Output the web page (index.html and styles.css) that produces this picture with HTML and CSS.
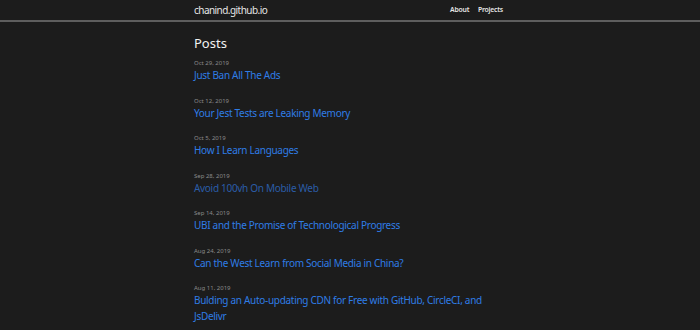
FILE: index.html
```html
<!DOCTYPE html>
<html lang="en">
<head>
    <meta charset="UTF-8">
    <meta name="viewport" content="width=device-width, initial-scale=1.0">
    <title>chanind.github.io</title>
    <link rel="stylesheet" href="styles.css">
</head>
<body>

    <!-- Header -->
    <header class="site-header">
        <div class="wrap header-inner">
            <a class="site-title" href="#">chanind.github.io</a>
            <nav class="site-nav">
                <a href="#">About</a>
                <a href="#">Projects</a>
            </nav>
        </div>
    </header>

    <main class="wrap">
        <h2 class="page-heading">Posts</h2>
        <ul class="post-list">
            <li>
                <span class="post-meta">Oct 29, 2019</span>
                <a class="post-link" href="#">Just Ban All The Ads</a>
            </li>
            <li>
                <span class="post-meta">Oct 12, 2019</span>
                <a class="post-link" href="#">Your Jest Tests are Leaking Memory</a>
            </li>
            <li>
                <span class="post-meta">Oct 5, 2019</span>
                <a class="post-link" href="#">How I Learn Languages</a>
            </li>
            <li>
                <span class="post-meta">Sep 28, 2019</span>
                <a class="post-link visited" href="#">Avoid 100vh On Mobile Web</a>
            </li>
            <li>
                <span class="post-meta">Sep 14, 2019</span>
                <a class="post-link" href="#">UBI and the Promise of Technological Progress</a>
            </li>
            <li>
                <span class="post-meta">Aug 24, 2019</span>
                <a class="post-link" href="#">Can the West Learn from Social Media in China?</a>
            </li>
            <li>
                <span class="post-meta">Aug 11, 2019</span>
                <a class="post-link" href="#">Bulding an Auto-updating CDN for Free with GitHub, CircleCI, and JsDelivr</a>
            </li>
        </ul>
    </main>

</body>
</html>
```

FILE: styles.css
```css
/* Global Styles */
body {
    font-family: 'Noto Sans', 'Open Sans', sans-serif;
    background-color: #1c1c1c;
    color: #e0e0e0;
    margin: 0;
}

a {
    text-decoration: none;
}

.wrap {
    width: 312px;
    margin: 0 auto;
}

/* Header */
.site-header {
    height: 20px;
    border-bottom: 2px solid #5e5e5e;
}

.header-inner {
    display: flex;
    justify-content: space-between;
    align-items: center;
    height: 20px;
}

.site-title {
    color: #e6e6e6;
    font-size: 10px;
    letter-spacing: -0.55px;
}

.site-nav {
    font-size: 6.8px;
    line-height: 10px;
    padding-right: 3px;
}

.site-nav a {
    color: #e6e6e6;
    font-weight: 600;
    letter-spacing: -0.2px;
    margin-left: 7px;
}

/* Posts */
.page-heading {
    font-size: 13px;
    font-weight: normal;
    color: #f2f2f2;
    margin: 12px 0 7px;
    line-height: 18px;
}

.post-list {
    list-style: none;
    margin: 0;
    padding: 0;
}

.post-list li {
    margin-bottom: 13.5px;
}

.post-meta {
    display: block;
    font-size: 6px;
    line-height: 8px;
    color: #8a8a8a;
}

.post-link {
    display: block;
    font-size: 10px;
    line-height: 16px;
    letter-spacing: -0.3px;
    color: #2f7de6;
}

.post-link.visited {
    color: #2b5da8;
}
```
